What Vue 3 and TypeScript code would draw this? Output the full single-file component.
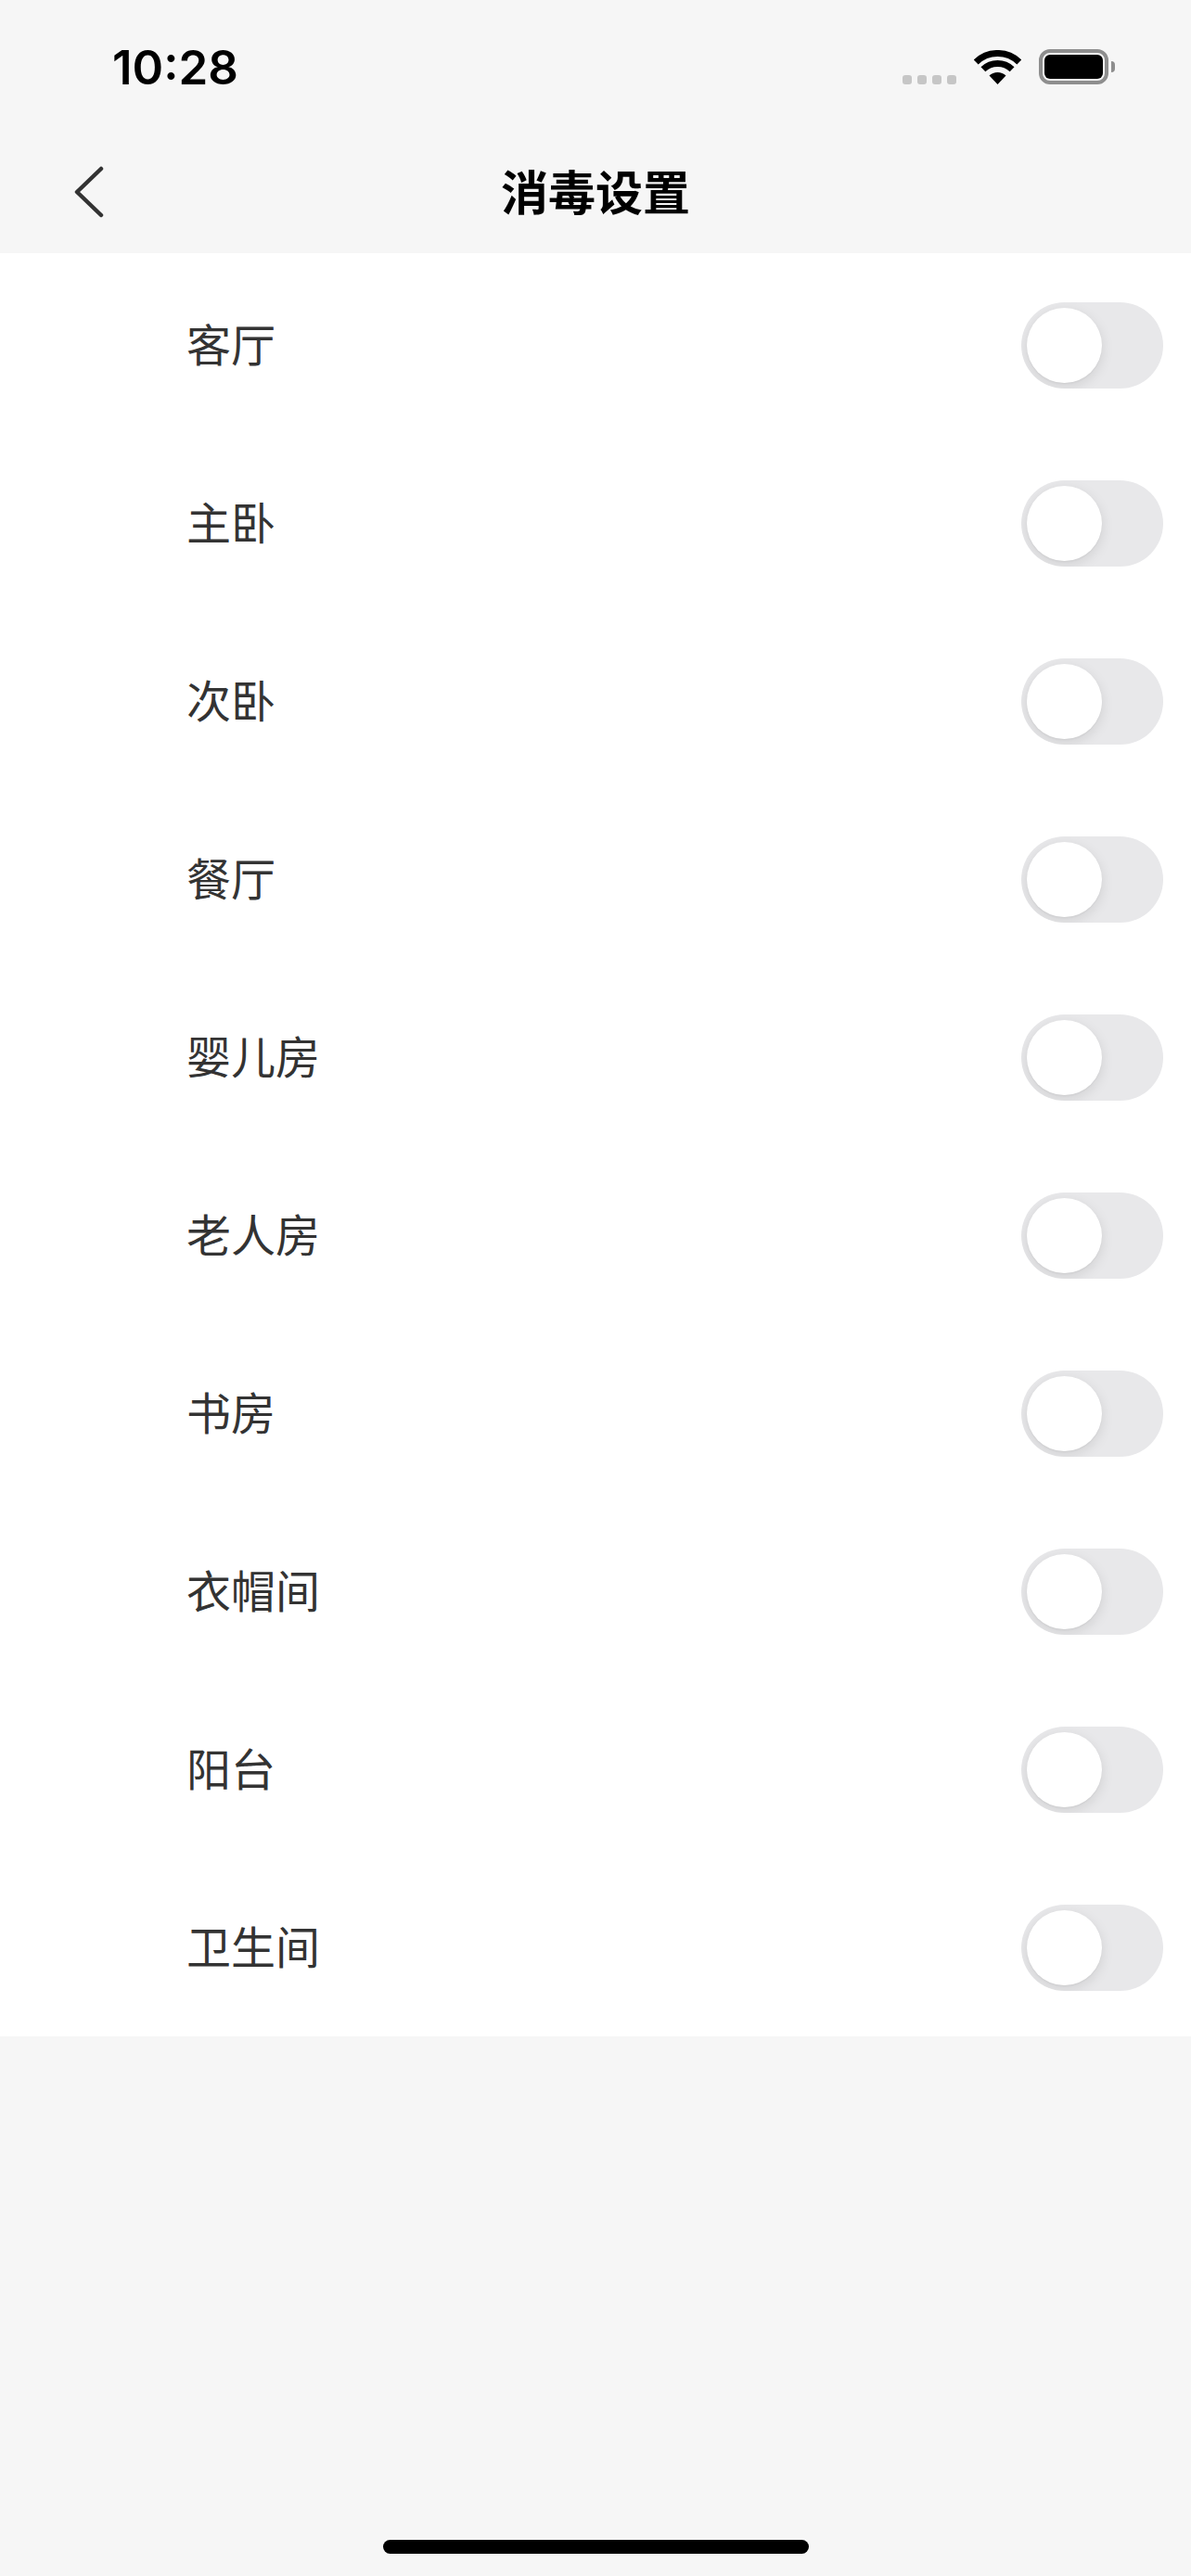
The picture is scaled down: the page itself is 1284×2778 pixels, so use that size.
<script setup lang="ts">
const rooms: string[] = ['客厅', '主卧', '次卧', '餐厅', '婴儿房', '老人房', '书房', '衣帽间', '阳台', '卫生间']
</script>

<template>
  <div class="page">
    <div class="status">
      <span class="time">10:28</span>
      <div class="status-right">
        <div class="dots"><i></i><i></i><i></i><i></i></div>
        <svg class="wifi" width="51" height="37" viewBox="0 0 51 37">
          <path d="M2.2 12.9A33.5 33.5 0 0 1 48.8 12.9" fill="none" stroke="#000" stroke-width="7" />
          <path d="M9.9 20.8A22.5 22.5 0 0 1 41.1 20.8" fill="none" stroke="#000" stroke-width="7" />
          <path d="M25.5 37L16.5 27.6A13 13 0 0 1 34.5 27.6Z" fill="#000" />
        </svg>
        <div class="battery"><div class="battery-fill"></div></div>
        <div class="battery-nub"></div>
      </div>
    </div>
    <div class="nav">
      <svg class="back" width="32" height="56" viewBox="0 0 32 56">
        <path d="M29 3L3 28L29 53" fill="none" stroke="#333" stroke-width="4.5" stroke-linecap="round" stroke-linejoin="round" />
      </svg>
      <span class="title">消毒设置</span>
    </div>
    <div class="list">
      <div v-for="room in rooms" :key="room" class="row">
        <span class="name">{{ room }}</span>
        <div class="switch"><div class="knob"></div></div>
      </div>
    </div>
    <div class="bottom">
      <div class="home"></div>
    </div>
  </div>
</template>

<style scoped>
.page {
  display: flex;
  flex-direction: column;
  width: 1284px;
  height: 2778px;
  background: #f6f6f6;
  font-family: "Noto Sans CJK SC", "Noto Sans", sans-serif;
}
.status {
  display: flex;
  justify-content: space-between;
  align-items: flex-start;
  height: 145px;
  box-sizing: border-box;
  padding: 45px 82px 0 121px;
}
.time {
  font-family: Inter, "Liberation Sans", sans-serif;
  font-size: 51px;
  font-weight: 600;
  line-height: 56px;
  color: #000;
}
.status-right {
  display: flex;
  align-items: flex-start;
  padding-top: 8px;
}
.dots {
  display: flex;
  gap: 6px;
  margin: 28px 19px 0 0;
}
.dots i {
  display: block;
  width: 10px;
  height: 10px;
  border-radius: 3px;
  background: #c6c6c6;
}
.wifi {
  margin: 1px 19px 0 0;
}
.battery {
  box-sizing: border-box;
  width: 75px;
  height: 38px;
  padding: 2px;
  border: 4px solid #8e8e8e;
  border-radius: 12px;
}
.battery-fill {
  width: 100%;
  height: 100%;
  background: #000;
  border-radius: 6px;
}
.battery-nub {
  width: 4px;
  height: 12px;
  margin: 13px 0 0 3px;
  background: #8e8e8e;
  border-radius: 0 6px 6px 0;
}
.nav {
  display: flex;
  align-items: center;
  justify-content: center;
  position: relative;
  height: 128px;
  padding-bottom: 8px;
  box-sizing: border-box;
}
.back {
  position: absolute;
  left: 80px;
  top: 34px;
}
.title {
  font-size: 51px;
  font-weight: 700;
  line-height: 70px;
  color: #000;
}
.list {
  display: flex;
  flex-direction: column;
  background: #fff;
  padding: 3px 0 0;
}
.row {
  display: flex;
  align-items: center;
  justify-content: space-between;
  height: 192px;
  padding: 0 30px 0 201px;
}
.name {
  font-size: 48px;
  line-height: 64px;
  margin-bottom: 7px;
  color: #333;
}
.switch {
  box-sizing: border-box;
  display: flex;
  align-items: center;
  width: 153px;
  height: 93px;
  padding-left: 6px;
  border-radius: 47px;
  background: #e8e8ea;
  overflow: hidden;
}
.knob {
  width: 81px;
  height: 81px;
  border-radius: 50%;
  background: #fff;
  box-shadow: 0 4px 14px rgba(0, 0, 0, 0.1), 0 1px 2px rgba(0, 0, 0, 0.05);
}
.bottom {
  display: flex;
  justify-content: center;
  align-items: flex-end;
  flex: 1;
  padding-bottom: 24px;
}
.home {
  width: 459px;
  height: 15px;
  border-radius: 8px;
  background: #000;
}
</style>
